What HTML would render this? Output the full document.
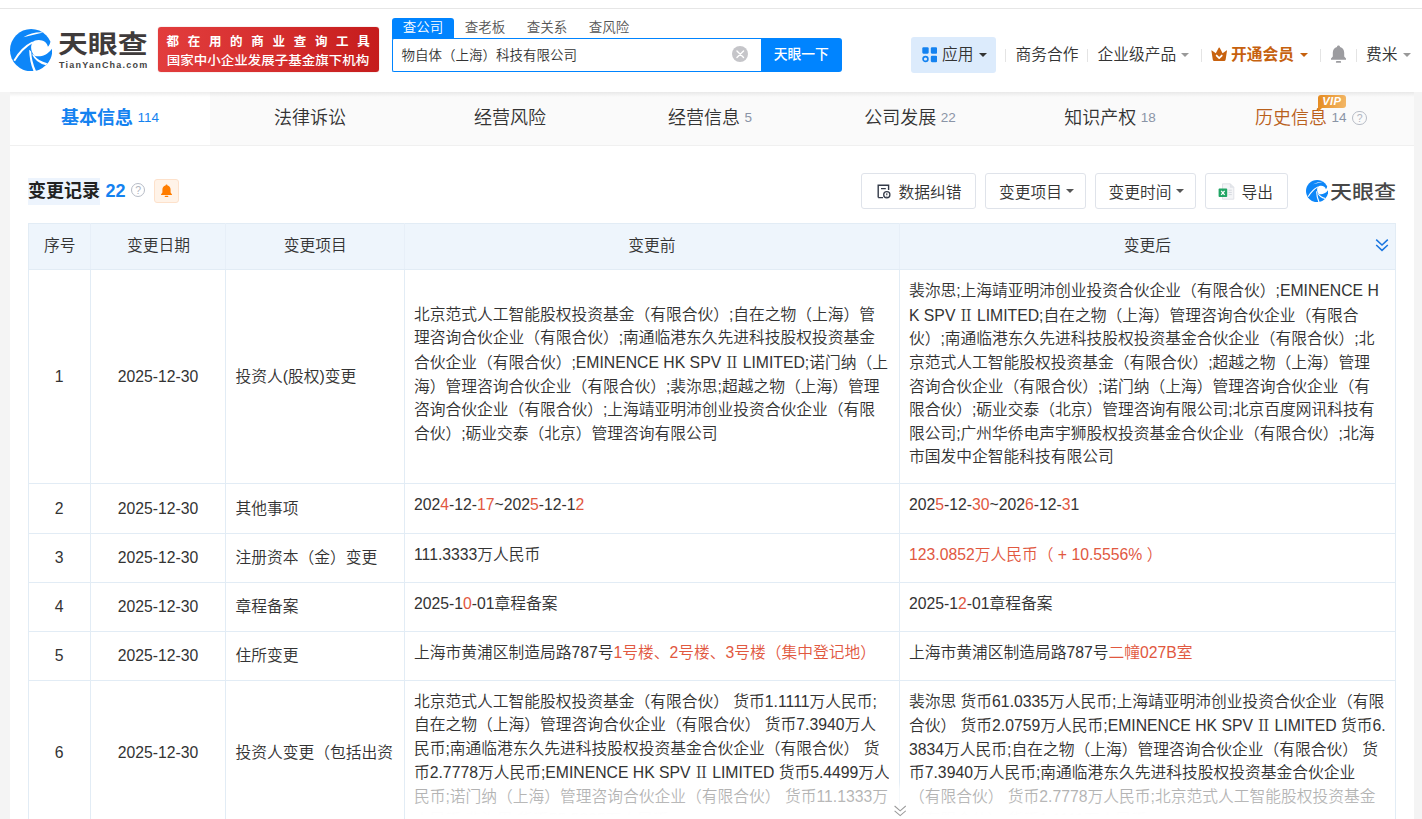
<!DOCTYPE html>
<html lang="zh-CN">
<head>
<meta charset="utf-8">
<title>天眼查 - 物自体（上海）科技有限公司</title>
<style>
*{box-sizing:border-box;margin:0;padding:0}
html,body{width:1422px;height:819px;overflow:hidden;background:#f4f4f4}
body{position:relative;font-weight:350;font-family:"Liberation Sans","Noto Sans CJK SC",sans-serif;color:#333;font-size:15.75px;line-height:23.625px;text-spacing-trim:space-all}
.abs{position:absolute}
/* header */
#hdr{position:absolute;left:0;top:0;width:1422px;height:92px;background:#fff}
#topline{position:absolute;left:0;top:8px;width:1422px;height:1px;background:#e6e6e6}
#logotxt{position:absolute;left:58px;top:23.8px;width:90px;height:36px;font-family:"Noto Sans CJK SC",sans-serif;font-weight:700;font-size:25.4px;line-height:36px;color:#3f3b3b;white-space:nowrap;transform-origin:0 50%;transform:scaleX(1.175);letter-spacing:0}
#logosub{position:absolute;left:59px;top:58.5px;font-size:9px;line-height:12px;font-weight:700;letter-spacing:1.22px;color:#444;white-space:nowrap}
#banner{position:absolute;left:158px;top:27px;width:221px;height:45px;border-radius:3px;background:linear-gradient(90deg,#e23d3d 0%,#d62f2f 50%,#c51c1c 100%);color:#fff;white-space:nowrap;box-shadow:0 0 1px rgba(160,20,20,.6)}
#banner .l1{position:absolute;left:8.5px;top:4px;font-size:12.5px;line-height:20px;font-weight:700;letter-spacing:8.7px;font-family:"Noto Sans CJK SC",sans-serif}
#banner .l2{position:absolute;left:8.8px;top:21.8px;font-size:13.5px;line-height:20px;font-weight:500;letter-spacing:0;transform:scaleY(.92);transform-origin:0 50%;font-family:"Noto Sans CJK SC",sans-serif}
.stab{position:absolute;top:18px;height:20.5px;width:62px;text-align:center;font-size:13.5px;line-height:20px;color:#555}
.stab.on{background:#0084ff;color:#fff;border-radius:3px 3px 0 0}
#sinput{position:absolute;left:392px;top:38px;width:370px;height:33.5px;border:1.5px solid #0084ff;border-right:0;border-radius:2px 0 0 2px;background:#fff;font-size:13.5px;line-height:33.5px;padding-left:8.5px;color:#333;white-space:nowrap}
#sbtn{position:absolute;left:761px;top:38px;width:80.5px;height:33.5px;background:#0084ff;border-radius:0 3px 3px 0;color:#fff;font-size:13.8px;line-height:30.5px;text-align:center;font-weight:500;font-family:"Noto Sans CJK SC",sans-serif}
#sclr{position:absolute;left:731.7px;top:45.7px;width:16.5px;height:16.5px;border-radius:50%;background:#c5c5c9}
.nav{position:absolute;top:43px;font-size:15.75px;line-height:23px;color:#333;white-space:nowrap}
.vdiv{position:absolute;top:48.5px;width:1px;height:13px;background:#e4e4e4}
.caret{position:absolute;width:0;height:0;border-left:4px solid transparent;border-right:4px solid transparent;border-top:4.5px solid #999}
/* container */
#wrap{position:absolute;left:10px;top:92px;width:1404px;height:727px;background:#fff}
#tabs{position:absolute;left:0;top:0;width:1404px;height:54px;background:#fafafa;border-bottom:1px solid #f0f0f0}
.tab{position:absolute;top:0;height:53px;width:200px;text-align:center;font-size:18px;line-height:26px;padding-top:12.5px;color:#333;white-space:nowrap}
.tab.on{background:#fff;color:#1482f0;font-weight:700;height:53px}
.tab small{font-size:13.5px;font-weight:400;color:#8a94a6;margin-left:4.5px;position:relative;top:-1.5px}
.tab.on small{color:#1482f0}
#hshadow{position:absolute;left:10px;top:92px;width:1404px;height:5px;background:linear-gradient(180deg,rgba(0,0,0,.07),rgba(0,0,0,0))}
/* section head */
#ttl{position:absolute;left:28px;top:178px;width:72px;height:27px;background:#edf4fd;font-size:18px;line-height:27px;font-weight:700;color:#222;white-space:nowrap}
#cnt{position:absolute;left:105.5px;top:178px;font-size:18px;line-height:27px;font-weight:700;color:#1482f0}
.qm{position:absolute;width:14.5px;height:14.5px;border:1.8px solid #b7bcc6;font-weight:400;border-radius:50%;font-size:10.5px;line-height:12px;text-align:center;color:#b0b5c0}
#bellbtn{position:absolute;left:154px;top:179px;width:24.75px;height:23.5px;background:#fff3e8;border:1px solid #fde1cb;border-radius:3px}
.btn{position:absolute;top:173.4px;height:35.4px;border:1px solid #dfe3ea;border-radius:3px;background:#fff;font-size:15.75px;line-height:34.4px;color:#333;white-space:nowrap}
.btn span{top:1.4px}
/* table */
#tbl{position:absolute;left:28px;top:223px;width:1367px;border-collapse:collapse;table-layout:fixed}
#tbl th{height:46px;padding-bottom:1px;background:#eef5fc;font-weight:350;color:#333;text-align:center;border:1px solid #e2ecf5;border-left-color:#e7eff8;border-right-color:#e7eff8;font-size:15.75px}
#tbl th:first-child{border-left-color:#e2ecf5}
#tbl th:last-child{border-right-color:#e2ecf5}
#tbl td{border:1px solid #e2ecf5;vertical-align:middle;padding:0 10px 0 9px;color:#333}
#tbl td.c{text-align:center;padding:0 1px 0 0}
#tbl td.v{vertical-align:top;padding:9px 9.5px 14px 9px;white-space:nowrap}
.rn{font-family:"Noto Serif CJK SC",serif;display:inline-block;width:12.8px;text-indent:-1.5px;font-weight:400}
.r{color:#e1583f}
</style>
</head>
<body>
<div id="hdr">
  <div id="topline"></div>
  
  <svg class="abs" style="left:9.9px;top:28.8px" width="42.3" height="42.3" viewBox="72 100 618 618">
<circle cx="381" cy="409" r="309" fill="#0d86f8"/>
<path fill="#fff" d="M720 270 L664 284 C658 318 644 342 626 360 C616 302 560 262 492 262 C452 262 420 274 400 296 C372 342 368 424 430 490 C500 512 604 500 688 384 L720 384 Z"/>
<path fill="#fff" d="M268 220 Q400 140 556 150 Q404 186 268 220 Z"/>
<path fill="#fff" d="M122 556 Q228 366 398 282 L412 300 Q252 392 146 572 Z"/>
<path fill="#fff" d="M352 404 Q356 580 418 722 L452 712 Q388 580 382 430 Z"/>
<path fill="#fff" d="M392 468 Q448 594 598 628 L616 600 Q482 572 420 478 Z"/>
</svg>
  <div id="logotxt">天眼查</div>
  <div id="logosub">TianYanCha.com</div>
  <div id="banner"><div class="l1">都在用的商业查询工具</div><div class="l2">国家中小企业发展子基金旗下机构</div></div>
  <div class="stab on" style="left:392px">查公司</div>
  <div class="stab" style="left:454px">查老板</div>
  <div class="stab" style="left:516px">查关系</div>
  <div class="stab" style="left:578px">查风险</div>
  <div id="sinput">物自体（上海）科技有限公司</div>
  <div id="sclr"><svg width="16.5" height="16.5" viewBox="0 0 16 16" style="display:block"><path d="M4.8 4.8 L11.2 11.2 M11.2 4.8 L4.8 11.2" stroke="#fff" stroke-width="1.3" stroke-linecap="round"/></svg></div>
  <div id="sbtn">天眼一下</div>
  <div class="abs" style="left:911.3px;top:37px;width:84.7px;height:36px;background:#dcebfc;border-radius:3px"></div>
  <svg class="abs" style="left:921.5px;top:47px" width="15.5" height="15.5" viewBox="0 0 16 16"><rect x="0.3" y="0.3" width="6.6" height="6.6" rx="1.2" fill="#1482f0"/><rect x="9.1" y="0.3" width="6.6" height="6.6" rx="1.2" fill="#1482f0"/><rect x="9.1" y="9.1" width="6.6" height="6.6" rx="1.2" fill="#1482f0"/><circle cx="3.6" cy="12.4" r="2.5" fill="none" stroke="#1482f0" stroke-width="1.7"/></svg>
  <div class="nav" style="left:942px">应用</div>
  <div class="caret" style="left:978.5px;top:52.5px;border-top-color:#333"></div>
  <div class="vdiv" style="left:1005px"></div>
  <div class="nav" style="left:1015.5px">商务合作</div>
  <div class="vdiv" style="left:1087px"></div>
  <div class="nav" style="left:1097.5px">企业级产品</div>
  <div class="caret" style="left:1181px;top:52.5px"></div>
  <div class="vdiv" style="left:1200.5px"></div>
  <svg class="abs" style="left:1210.6px;top:46.5px" width="16.4" height="14.6" viewBox="0 0 16 14"><path fill="#c8620f" d="M0.4 3.6 Q0.3 2.9 0.9 3.3 L4.7 6 L7.5 0.7 Q8 0 8.5 0.7 L11.3 6 L15.1 3.3 Q15.7 2.9 15.6 3.6 L14.3 12.2 Q14.1 13.6 12.6 13.6 L3.4 13.6 Q1.9 13.6 1.7 12.2 Z"/><path d="M5.5 8.2 L8 10.7 L10.5 8.2" stroke="#fff" stroke-width="1.7" fill="none" stroke-linecap="round" stroke-linejoin="round"/></svg>
  <div class="nav" style="left:1231px;color:#c6610e;font-weight:700">开通会员</div>
  <div class="caret" style="left:1299.5px;top:52.5px;border-top-color:#c6610e"></div>
  <div class="vdiv" style="left:1319.5px"></div>
  <svg class="abs" style="left:1329.8px;top:45.3px" width="17" height="19" viewBox="0 0 17 19"><path fill="#9c9ca0" d="M8.5 0.6 C9.4 0.6 10 1.2 10 2 C12.6 2.7 14.2 4.9 14.2 7.8 L14.2 11.4 L16 13.6 L16 14.8 L1 14.8 L1 13.6 L2.8 11.4 L2.8 7.8 C2.8 4.9 4.4 2.7 7 2 C7 1.2 7.6 0.6 8.5 0.6 Z"/><rect x="5.9" y="16" width="5.2" height="1.8" rx="0.9" fill="#9c9ca0"/></svg>
  <div class="vdiv" style="left:1356px"></div>
  <div class="nav" style="left:1366px">费米</div>
  <div class="caret" style="left:1402.5px;top:52.5px"></div>
</div>
<div id="wrap">
  <div id="tabs">
    <div class="tab on" style="left:0">基本信息<small>114</small></div>
    <div class="tab" style="left:200px">法律诉讼</div>
    <div class="tab" style="left:400px">经营风险</div>
    <div class="tab" style="left:600px">经营信息<small>5</small></div>
    <div class="tab" style="left:800px">公司发展<small>22</small></div>
    <div class="tab" style="left:1000px">知识产权<small>18</small></div>
    <div class="tab" style="left:1200px;color:#b9601c;text-align:left;padding-left:45px">历史信息<small>14</small></div>
  </div>
</div>
<div id="hshadow"></div>

<div class="abs" id="vip" style="left:1318px;top:95px;width:27.5px;height:13px;border-radius:3px 3px 3px 0;background:linear-gradient(100deg,#e58a1f,#f3b868);color:#fff;font-size:11.2px;line-height:13.5px;font-weight:700;font-style:italic;text-align:center;letter-spacing:.4px">VIP</div>
<div class="abs" style="left:1318px;top:107.5px;width:0;height:0;border-top:4px solid #e58a1f;border-right:4px solid transparent"></div>
<div class="qm" style="left:1352.3px;top:110.5px">?</div>
<div id="ttl">变更记录</div>
<div id="cnt">22</div>
<div class="qm" style="left:130.8px;top:182.5px">?</div>
<div id="bellbtn"><svg width="13" height="14" viewBox="0 0 13 14" style="position:absolute;left:5px;top:4px"><path fill="#ff7d00" d="M6.5 0.6 C7.1 0.6 7.5 1 7.5 1.5 C9.5 2 10.6 3.6 10.6 5.8 L10.6 8.6 L12 10.4 L12 11 L1 11 L1 10.4 L2.4 8.6 L2.4 5.8 C2.4 3.6 3.5 2 5.5 1.5 C5.5 1 5.9 0.6 6.5 0.6 Z"/><rect x="4.7" y="11.8" width="3.6" height="1.3" rx="0.65" fill="#ff7d00"/></svg></div>
<div class="btn" style="left:861.4px;width:114.5px"><svg style="position:absolute;left:14.8px;top:9.8px" width="14" height="15" viewBox="0 0 14 15"><path d="M1.2 13.6 L1.2 1.2 L11.6 1.2 L11.6 6" fill="none" stroke="#333a48" stroke-width="1.4"/><path d="M1.2 13.6 L6 13.6 M4 4.6 L8.8 4.6" fill="none" stroke="#333a48" stroke-width="1.4"/><circle cx="9.8" cy="10.8" r="3.1" fill="none" stroke="#333a48" stroke-width="1.3"/><path d="M9.8 9.2 L9.8 11.2 M9.8 12 L9.8 12.6" stroke="#333a48" stroke-width="1.1"/></svg><span style="position:absolute;left:36px">数据纠错</span></div>
<div class="btn" style="left:985.4px;width:100.8px"><span style="position:absolute;left:12.5px">变更项目</span><i class="caret" style="left:80px;top:14.5px;border-top-color:#555"></i></div>
<div class="btn" style="left:1095px;width:100.8px"><span style="position:absolute;left:12.5px">变更时间</span><i class="caret" style="left:80px;top:14.5px;border-top-color:#555"></i></div>
<div class="btn" style="left:1205px;width:82.6px"><svg style="position:absolute;left:12px;top:8.7px" width="17" height="17" viewBox="0 0 17 17"><path d="M4.5 0.8 L12.3 0.8 L15.8 4.3 L15.8 16.2 L4.5 16.2 Z" fill="#f4f5f7" stroke="#d9dce2" stroke-width="0.8"/><path d="M12.3 0.8 L12.3 4.3 L15.8 4.3" fill="#e3e6ea" stroke="#d9dce2" stroke-width="0.6"/><path d="M10.6 7.2h3.2M10.6 9.4h3.2M10.6 11.6h3.2" stroke="#d5d8de" stroke-width="1"/><rect x="0.6" y="5.6" width="8.6" height="8.4" rx="0.8" fill="#21a565"/><path d="M3.2 7.8 L6.6 11.8 M6.6 7.8 L3.2 11.8" stroke="#fff" stroke-width="1.3"/></svg><span style="position:absolute;left:35.5px">导出</span></div>
<svg class="abs" style="left:1305.8px;top:180px" width="22.2" height="22.2" viewBox="72 100 618 618">
<circle cx="381" cy="409" r="309" fill="#0d86f8"/>
<path fill="#fff" d="M720 270 L664 284 C658 318 644 342 626 360 C616 302 560 262 492 262 C452 262 420 274 400 296 C372 342 368 424 430 490 C500 512 604 500 688 384 L720 384 Z"/>
<path fill="#fff" d="M268 220 Q400 140 556 150 Q404 186 268 220 Z"/>
<path fill="#fff" d="M122 556 Q228 366 398 282 L412 300 Q252 392 146 572 Z"/>
<path fill="#fff" d="M352 404 Q356 580 418 722 L452 712 Q388 580 382 430 Z"/>
<path fill="#fff" d="M392 468 Q448 594 598 628 L616 600 Q482 572 420 478 Z"/>
</svg>
<div class="abs" id="logo2" style="left:1330px;top:177.3px;font-family:'Noto Sans CJK SC',sans-serif;font-weight:500;font-size:19.5px;line-height:27px;color:#474747;white-space:nowrap;transform-origin:0 50%;transform:scaleX(1.13)">天眼查</div>
<table id="tbl"><colgroup><col style="width:62.4px"><col style="width:135.1px"><col style="width:178.5px"><col style="width:495px"><col style="width:496px"></colgroup>
<tr><th>序号</th><th>变更日期</th><th>变更项目</th><th>变更前</th><th>变更后</th></tr>
<tr class="first" style="height:214px"><td class="c">1</td><td class="c">2025-12-30</td><td style="white-space:nowrap;overflow:hidden">投资人(股权)变更</td><td class="v"><br>北京范式人工智能股权投资基金（有限合伙）;自在之物（上海）管<br>理咨询合伙企业（有限合伙）;南通临港东久先进科技股权投资基金<br>合伙企业（有限合伙）;EMINENCE HK SPV <span class="rn">Ⅱ</span> LIMITED;诺门纳（上<br>海）管理咨询合伙企业（有限合伙）;裴沵思;超越之物（上海）管理<br>咨询合伙企业（有限合伙）;上海靖亚明沛创业投资合伙企业（有限<br>合伙）;砺业交泰（北京）管理咨询有限公司</td><td class="v">裴沵思;上海靖亚明沛创业投资合伙企业（有限合伙）;EMINENCE H<br>K SPV <span class="rn">Ⅱ</span> LIMITED;自在之物（上海）管理咨询合伙企业（有限合<br>伙）;南通临港东久先进科技股权投资基金合伙企业（有限合伙）;北<br>京范式人工智能股权投资基金（有限合伙）;超越之物（上海）管理<br>咨询合伙企业（有限合伙）;诺门纳（上海）管理咨询合伙企业（有<br>限合伙）;砺业交泰（北京）管理咨询有限公司;北京百度网讯科技有<br>限公司;广州华侨电声宇狮股权投资基金合伙企业（有限合伙）;北海<br>市国发中企智能科技有限公司</td></tr>
<tr style="height:50px"><td class="c">2</td><td class="c">2025-12-30</td><td style="white-space:nowrap;overflow:hidden">其他事项</td><td class="v">202<span class="r">4</span>-12-<span class="r">17</span>~202<span class="r">5</span>-12-1<span class="r">2</span></td><td class="v">202<span class="r">5</span>-12-<span class="r">30</span>~202<span class="r">6</span>-12-<span class="r">3</span>1</td></tr>
<tr style="height:49px"><td class="c">3</td><td class="c">2025-12-30</td><td style="white-space:nowrap;overflow:hidden">注册资本（金）变更</td><td class="v">111.3333万人民币</td><td class="v"><span class="r">123.0852万人民币（ + 10.5556% ）</span></td></tr>
<tr style="height:49px"><td class="c">4</td><td class="c">2025-12-30</td><td style="white-space:nowrap;overflow:hidden">章程备案</td><td class="v">2025-1<span class="r">0</span>-01章程备案</td><td class="v">2025-1<span class="r">2</span>-01章程备案</td></tr>
<tr style="height:49px"><td class="c">5</td><td class="c">2025-12-30</td><td style="white-space:nowrap;overflow:hidden">住所变更</td><td class="v">上海市黄浦区制造局路787号<span class="r">1号楼、2号楼、3号楼（集中登记地）</span></td><td class="v">上海市黄浦区制造局路787号<span class="r">二幢027B室</span></td></tr>
<tr class="last" style="height:144px"><td class="c">6</td><td class="c">2025-12-30</td><td style="white-space:nowrap;overflow:hidden">投资人变更（包括出资</td><td class="v" style="padding-bottom:0"><div style="height:125px;overflow:hidden;line-height:23.42px">北京范式人工智能股权投资基金（有限合伙） 货币1.1111万人民币;<br>自在之物（上海）管理咨询合伙企业（有限合伙） 货币7.3940万人<br>民币;南通临港东久先进科技股权投资基金合伙企业（有限合伙） 货<br>币2.7778万人民币;EMINENCE HK SPV <span class="rn">Ⅱ</span> LIMITED 货币5.4499万人<br>民币;诺门纳（上海）管理咨询合伙企业（有限合伙） 货币11.1333万<br>人民币;裴沵思 货币55.5835万人民币</div></td><td class="v" style="padding-bottom:0"><div style="height:125px;overflow:hidden;line-height:23.42px">裴沵思 货币61.0335万人民币;上海靖亚明沛创业投资合伙企业（有限<br>合伙） 货币2.0759万人民币;EMINENCE HK SPV <span class="rn">Ⅱ</span> LIMITED 货币6.<br>3834万人民币;自在之物（上海）管理咨询合伙企业（有限合伙） 货<br>币7.3940万人民币;南通临港东久先进科技股权投资基金合伙企业<br>（有限合伙） 货币2.7778万人民币;北京范式人工智能股权投资基金<br>（有限合伙） 货币1.1111万人民币</div></td></tr>
</table>
<svg class="abs" style="left:1375px;top:238px" width="14" height="14" viewBox="0 0 14 14"><path d="M1.2 1.6 L7 7 L12.8 1.6 M1.2 7 L7 12.4 L12.8 7" fill="none" stroke="#1a76e0" stroke-width="1.5"/></svg>
<div class="abs" style="left:405px;top:782px;width:990px;height:37px;background:linear-gradient(180deg,rgba(255,255,255,0) 0,rgba(255,255,255,.62) 7px,rgba(255,255,255,.66) 22px,rgba(255,255,255,.993) 27px,rgba(255,255,255,.993) 100%)"></div>
<svg class="abs" style="left:893.5px;top:805px" width="12.4" height="12" viewBox="0 0 12.4 12"><path d="M0.6 1 L6.2 5.8 L11.8 1 M0.6 5.8 L6.2 10.6 L11.8 5.8" fill="none" stroke="#9a9a9a" stroke-width="1.1"/></svg>
</body>
</html>
